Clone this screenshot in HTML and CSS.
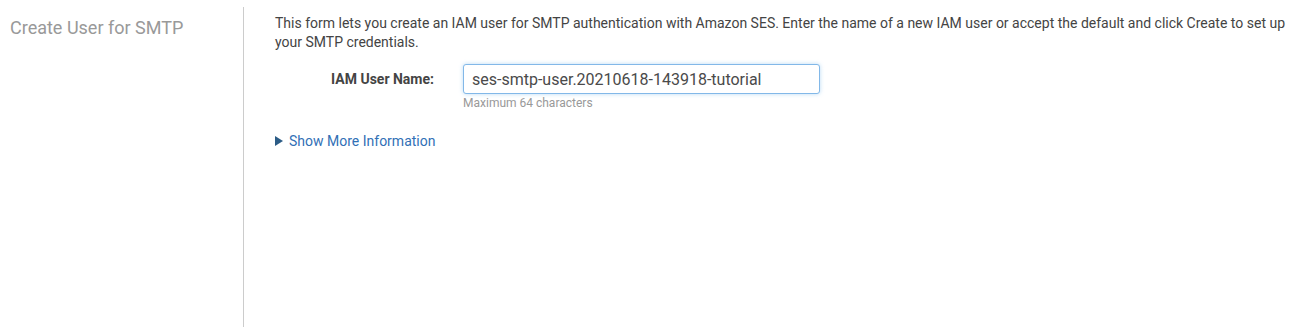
FILE: index.html
```html
<!DOCTYPE html>
<html lang="en">
<head>
    <meta charset="UTF-8">
    <title>Create User for SMTP</title>
    <link rel="stylesheet" href="styles.css">
</head>
<body>
    <!-- Layout em duas colunas -->
    <div class="page">
        <aside class="sidebar">
            <h2 class="step-title">Create User for SMTP</h2>
        </aside>
        <main class="content">
            <p class="intro">This form lets you create an IAM user for SMTP authentication with Amazon SES. Enter the name of a new IAM user or accept the default and click Create to set up your SMTP credentials.</p>
            <div class="form-row">
                <label class="form-label" for="iamUser">IAM User Name:</label>
                <div class="form-field">
                    <input type="text" id="iamUser" class="text-input" value="ses-smtp-user.20210618-143918-tutorial">
                    <div class="hint">Maximum 64 characters</div>
                </div>
            </div>
            <a class="more-info" href="#"><span class="caret"></span>Show More Information</a>
        </main>
    </div>
</body>
</html>
```

FILE: styles.css
```css
/* Corpo da página */
body {
    margin: 0;
    background-color: #ffffff;
    font-family: Roboto, "Liberation Sans", Arial, sans-serif;
    color: #444444;
}

.page {
    display: flex;
    height: 327px;
    padding-top: 7px;
    box-sizing: border-box;
}

/* Coluna da esquerda */
.sidebar {
    width: 243px;
    border-right: 1px solid #cccccc;
    flex-shrink: 0;
}

.step-title {
    margin: 10px 0 0 10px;
    font-size: 18px;
    font-weight: 400;
    color: #999999;
    line-height: 22px;
}

/* Coluna principal */
.content {
    padding: 7px 0 0 31px;
    font-size: 14px;
    display: flex;
    flex-direction: column;
    align-items: flex-start;
}

.intro {
    margin: 0;
    line-height: 19px;
    max-width: 1015px;
}

.form-row {
    display: flex;
    margin-top: 12px;
}

.form-label {
    width: 159px;
    text-align: right;
    font-weight: 700;
    line-height: 30px;
    margin-right: 29px;
}

.text-input {
    width: 357px;
    height: 30px;
    box-sizing: border-box;
    border: 1px solid #82b8e8;
    border-radius: 3px;
    box-shadow: 0 0 4px rgba(102, 175, 233, 0.45);
    padding: 0 8px;
    font-family: Roboto, "Liberation Sans", Arial, sans-serif;
    font-size: 16px;
    color: #4a4a4a;
    outline: none;
}

.hint {
    font-size: 12px;
    line-height: 14px;
    color: #999999;
    margin-top: 2px;
}

.more-info {
    display: inline-flex;
    align-items: center;
    margin-top: 22px;
    line-height: 18px;
    color: #3170b6;
    text-decoration: none;
}

.caret {
    width: 0;
    height: 0;
    border-top: 5px solid transparent;
    border-bottom: 5px solid transparent;
    border-left: 8px solid #2c5c86;
    margin-right: 6px;
}
```
